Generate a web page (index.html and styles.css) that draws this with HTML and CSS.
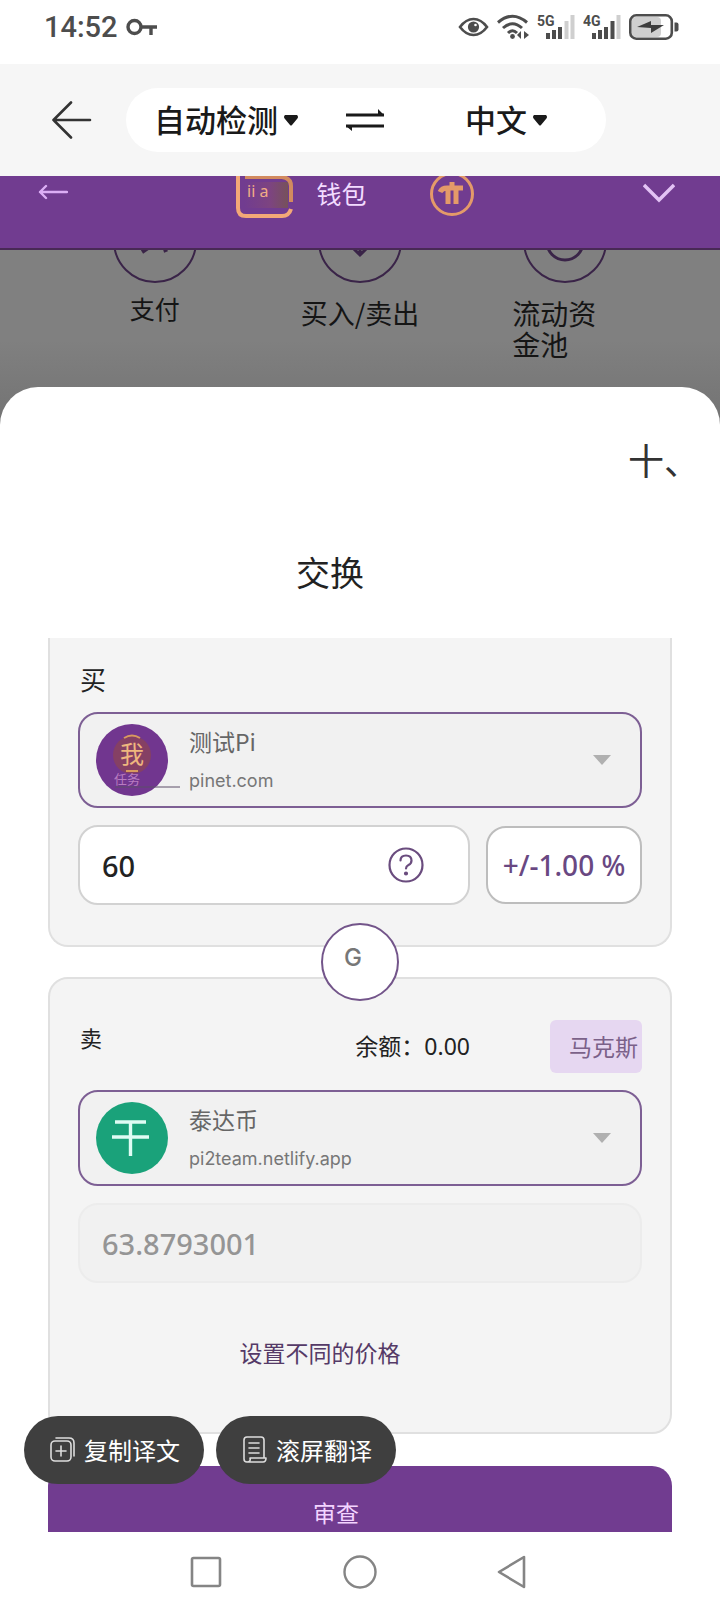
FILE: index.html
```html
<!DOCTYPE html>
<html lang="zh-CN">
<head>
<meta charset="utf-8">
<meta name="viewport" content="width=device-width, initial-scale=1">
<title>交换</title>
<link rel="stylesheet" href="styles.css">
</head>
<body>
<div class="status">
  <span class="clock">14:52</span>
  <svg class="key" width="32" height="18" viewBox="0 0 32 18" fill="none" stroke="#4d4d4d" stroke-width="3.4"><circle cx="8.500" cy="9" r="6.500"/><path d="M15 9h16M25 9v8"/></svg>
  <div class="status-icons">
    <svg width="31" height="20" viewBox="0 0 31 20"><path d="M2 10Q8 2 15.500 2T29 10Q23 18 15.500 18T2 10z" fill="none" stroke="#4d4d4d" stroke-width="2.600"/><circle cx="15.500" cy="10" r="5.600" fill="#4d4d4d"/><circle cx="17.500" cy="8" r="1.300" fill="#fff"/></svg>
    <svg width="32" height="26" viewBox="0 0 32 26" fill="none" stroke="#4d4d4d" stroke-width="3"><path d="M1 8.500Q15.500-4 30 8.500M6 14Q15.500 5.500 25 14M11 19Q15.500 14.500 20 19"/><circle cx="15.500" cy="22.500" r="2.400" fill="#4d4d4d" stroke="none"/><path d="M24 17v8l-4-4zM27 17v8l5-4z" fill="#4d4d4d" stroke="none"/></svg>
    <svg class="sig" width="38" height="26" viewBox="0 0 38 26"><text x="0" y="12">5G</text><path d="M11 25v-6M17 25V16M23 25V13" stroke="#4d4d4d" stroke-width="4"/><path d="M29.500 25V7M35.500 25V1" stroke="#cfcfcf" stroke-width="4"/></svg>
    <svg class="sig" width="38" height="26" viewBox="0 0 38 26"><text x="0" y="12">4G</text><path d="M11 25v-6M17 25V16M23 25V13M29.500 25V7" stroke="#4d4d4d" stroke-width="4"/><path d="M35.500 25V1" stroke="#cfcfcf" stroke-width="4"/></svg>
    <svg width="50" height="26" viewBox="0 0 50 26"><rect x="3" y="3" width="29" height="20" rx="4" fill="#cfcfcf"/><rect x="1.300" y="1.300" width="41.500" height="23.400" rx="6" fill="none" stroke="#4d4d4d" stroke-width="2.600"/><path d="M45.500 8.500h2q2 0 2 2v5q0 2-2 2h-2z" fill="#4d4d4d"/><path d="M8 13l14-6v4h13l-13 8v-5z" fill="#3d3d3d"/></svg>
  </div>
</div>

<header class="toolbar">
  <button class="back" type="button" aria-label="返回"><svg width="40" height="40" viewBox="0 0 40 40" fill="none" stroke="#333" stroke-width="2.600" stroke-linecap="round" stroke-linejoin="round"><path d="M38 20H1.500M19 2.500L1.500 20L19 37.500"/></svg></button>
  <div class="langs">
    <select class="lang" aria-label="源语言"><option>自动检测</option></select>
    <svg class="tri" width="14" height="11" viewBox="0 0 14 11"><path d="M1 0h12q2 2 0 4L8 10q-1 1-2 0L1 4Q-1 2 1 0z" fill="#1a1a1a"/></svg>
    <button class="switch" type="button" aria-label="交换语言"><svg width="38" height="22" viewBox="0 0 38 22"><path d="M0 6h38M0 17h38" stroke="#1a1a1a" stroke-width="2.800"/><path d="M32 0l6 6h-6zM0 17h6v5z" fill="#1a1a1a"/></svg></button>
    <select class="lang lang-to" aria-label="目标语言"><option>中文</option></select>
    <svg class="tri" width="14" height="11" viewBox="0 0 14 11"><path d="M1 0h12q2 2 0 4L8 10q-1 1-2 0L1 4Q-1 2 1 0z" fill="#1a1a1a"/></svg>
  </div>
</header>

<main class="page">
  <div class="wallet">
    <button class="plain" type="button" aria-label="后退"><svg width="30" height="34" viewBox="0 0 30 34" fill="none" stroke="#dcaef5" stroke-width="2.400" stroke-linecap="round" stroke-linejoin="round"><path d="M29 16H2M8 10l-6 6l6 6"/></svg></button>
    <div class="brand">
      <svg width="57" height="44" viewBox="0 0 57 44"><defs><linearGradient id="g"><stop offset="0" stop-color="#713c90"/><stop offset="0.600" stop-color="#7d4480"/><stop offset="1" stop-color="#76515b"/></linearGradient></defs><rect x="8" y="6" width="44" height="26" fill="url(#g)"/><path d="M2-4V32q0 8 8 8H46q7 0 9-7" fill="none" stroke="#f3a877" stroke-width="4"/><path d="M9 1H46q9 1 9 9V26" fill="none" stroke="#d28a5f" stroke-width="4"/><text class="mini" x="11" y="21">ii a</text></svg>
      <h1 class="wallet-name">钱包</h1>
      <svg width="46" height="42" viewBox="0 0 46 42" fill="none" stroke="#e49a69"><circle cx="23" cy="18" r="20.500" stroke-width="3"/><path d="M11 16q2-4 7-4h16M19 12v16M27 12v16M23 6v6" stroke-width="5"/></svg>
    </div>
    <button class="plain" type="button" aria-label="展开"><svg width="32" height="34" viewBox="0 0 32 34" fill="none" stroke="#e3c3f5" stroke-width="3.400"><path d="M1 9l15 15L31 9"/></svg></button>
  </div>

  <div class="actions">
    <div class="action"><svg width="84" height="34" viewBox="0 0 84 34" fill="none" stroke="#3a2448" stroke-width="2"><circle cx="42" cy="-9" r="41"/><path d="M29 2l6-4M51-4l2 6" stroke-width="4"/></svg><span class="a-pay">支付</span></div>
    <div class="action"><svg width="84" height="34" viewBox="0 0 84 34" fill="none" stroke="#3a2448" stroke-width="2"><circle cx="42" cy="-9" r="41"/><path d="M34-3l8 8l8-8M42-4v9" stroke-width="3"/></svg><span class="a-trade">买入/卖出</span></div>
    <div class="action"><svg width="84" height="34" viewBox="0 0 84 34" fill="none" stroke="#3a2448" stroke-width="2"><circle cx="42" cy="-9" r="41"/><circle cx="42" cy="-8" r="18" stroke-width="3"/></svg><span class="a-pool">流动资金池</span></div>
  </div>

  <section class="sheet">
    <button class="close" type="button">十、</button>
    <h2 class="title">交换</h2>
    <form class="form">
      <div class="card buy">
        <label class="side" for="buy">买</label>
        <div class="token">
          <svg class="coin" width="86" height="72" viewBox="0 0 86 72"><circle cx="36" cy="36" r="36" fill="#71368f"/><circle cx="36" cy="31" r="19" fill="#854064"/><path d="M28 14q8-5 16 0M30 47h12" stroke="#d99a5f" stroke-width="2" fill="none"/><path d="M19 63h65" stroke="#5d4e68"/><text class="coin-main" x="36" y="39">我</text><text class="coin-sub" x="31" y="60">任务</text></svg>
          <div class="token-text"><select class="token-name" id="buy"><option>测试Pi</option></select><span class="domain">pinet.com</span></div>
          <svg width="18" height="10" viewBox="0 0 18 10"><path d="M0 0h18L9 10z" fill="#b0b0b0"/></svg>
        </div>
        <div class="amount-row">
          <div class="amount">
            <input class="field" type="text" value="60" aria-label="买入数量">
            <button class="plain" type="button" aria-label="帮助"><svg width="36" height="36" viewBox="0 0 36 36" fill="none" stroke="#6a4c7e" stroke-width="2.200"><circle cx="18" cy="18" r="16.500"/><path d="M12.500 13.500q0-5 5.500-5t5.500 5q0 3-3 4.500q-2.500 1.300-2.500 3.500" stroke-linecap="round"/><circle cx="18" cy="26.500" r="1" fill="#6a4c7e"/></svg></button>
          </div>
          <button class="percent" type="button">+/-1.00 %</button>
        </div>
      </div>
      <div class="between"><button class="flip" type="button">G</button></div>
      <div class="card">
        <div class="sell-head">
          <label class="side side-sell" for="sell">卖</label>
          <span class="balance">余额：0.00</span>
          <button class="max" type="button">马克斯</button>
        </div>
        <div class="token">
          <svg class="coin" width="86" height="72" viewBox="0 0 86 72"><circle cx="36" cy="36" r="36" fill="#1aa27a"/><path d="M19 20h31M16 35h37M34.500 20v34" stroke="#dffcf4" stroke-width="3.400"/></svg>
          <div class="token-text"><select class="token-name" id="sell"><option>泰达币</option></select><span class="domain">pi2team.netlify.app</span></div>
          <svg width="18" height="10" viewBox="0 0 18 10"><path d="M0 0h18L9 10z" fill="#b0b0b0"/></svg>
        </div>
        <div class="amount amount-off"><input class="field" type="text" value="63.8793001" aria-label="卖出数量" disabled></div>
        <a class="price" href="#">设置不同的价格</a>
      </div>
      <button class="review" type="submit">审查</button>
    </form>
  </section>

  <div class="floating">
    <button class="chip" type="button"><svg width="26" height="26" viewBox="0 0 26 26" fill="none" stroke="#ddd" stroke-width="1.600" stroke-linecap="round"><rect x="1" y="4" width="20" height="20" rx="4"/><path d="M11 9v10M6 14h10M6 1h13q5 0 5 5v13"/></svg>复制译文</button>
    <button class="chip" type="button"><svg width="26" height="28" viewBox="0 0 26 28" fill="none" stroke="#ddd" stroke-width="1.600" stroke-linecap="round" stroke-linejoin="round"><path d="M22 21V4q0-3-3-3H5Q2 1 2 4v19q0 3 3 3h16q3 0 3-4H8q1 4-3 4M7 7h10M7 12h10M7 17h10"/></svg>滚屏翻译</button>
  </div>
</main>

<nav class="nav">
  <button class="plain" type="button" aria-label="最近任务"><svg width="34" height="34" viewBox="0 0 34 34" fill="none" stroke="#858585" stroke-width="2.600"><rect x="3" y="3" width="28" height="28" rx="1.500"/></svg></button>
  <button class="plain" type="button" aria-label="主页"><svg width="34" height="34" viewBox="0 0 34 34" fill="none" stroke="#858585" stroke-width="2.400"><circle cx="17" cy="17" r="15.500"/></svg></button>
  <button class="plain" type="button" aria-label="返回上级"><svg width="34" height="34" viewBox="0 0 34 34" fill="none" stroke="#858585" stroke-width="2.600" stroke-linejoin="round"><path d="M27 2v30L2 17z"/></svg></button>
</nav>
</body>
</html>
```
FILE: styles.css
```css
* { box-sizing: border-box; }
body {
  margin: 0;
  min-height: 100vh;
  display: flex;
  flex-direction: column;
  background: #fff;
  color: #222;
  font-family: "Noto Sans", "Noto Sans CJK SC", sans-serif;
}
button, select, input {
  margin: 0;
  padding: 0;
  border: 0;
  background: none;
  color: inherit;
  font: inherit;
}
select { appearance: none; }
svg { display: block; flex: none; }
.plain { display: block; flex: none; }

.status {
  display: flex;
  align-items: center;
  height: 64px;
  padding: 0 41px 10px 44px;
}
.clock { font: 500 29px/32px Roboto, sans-serif; color: #4d4d4d; }
.key { margin-left: 8px; }
.status-icons { display: flex; align-items: center; gap: 8px; margin-left: auto; }
.sig text { font: 700 14px Roboto, sans-serif; fill: #4d4d4d; }

.toolbar {
  display: flex;
  align-items: center;
  height: 112px;
  padding: 0 114px 0 52px;
  background: #f6f6f6;
}
.back { margin-right: 34px; }
.langs {
  display: flex;
  align-items: center;
  flex: 1;
  height: 64px;
  padding: 0 59px 0 28px;
  border-radius: 32px;
  background: #fff;
}
.lang {
  height: 46px;
  margin-bottom: 2px;
  font: 500 31px/46px "Noto Sans CJK SC", sans-serif;
  color: #1a1a1a;
}
.tri { margin-left: 6px; }
.switch { margin-left: 48px; }
.lang-to { margin-left: auto; }

.page {
  position: relative;
  display: flex;
  flex-direction: column;
  flex: 1;
  overflow: hidden;
}
.wallet {
  display: flex;
  align-items: flex-start;
  justify-content: space-between;
  height: 74px;
  padding: 0 45px 0 38px;
  background: #713c90;
  border-bottom: 2px solid #482955;
}
.brand { display: flex; align-items: flex-start; }
.mini { font: 16px "Noto Sans", sans-serif; fill: #f0ad86; }
.wallet-name {
  margin: 0 62px 0 23px;
  font: 400 25px/34px "Noto Sans CJK SC", sans-serif;
  color: #f3dcff;
}
.actions {
  display: grid;
  grid-template-columns: repeat(3, 1fr);
  height: 180px;
  padding: 0 52px;
  background: linear-gradient(#808080 50%, #727272);
  color: #151515;
  font-family: "Noto Sans CJK SC", sans-serif;
}
.action { display: flex; flex-direction: column; align-items: center; }
.a-pay { margin-top: 6px; font-size: 25px; line-height: 36px; }
.a-trade { margin-top: 11px; font-size: 27px; line-height: 36px; }
.a-pool { width: 106px; margin-top: 14px; font-size: 28px; line-height: 31px; }

.sheet {
  display: flex;
  flex-direction: column;
  flex: 1;
  margin-top: -43px;
  padding: 48px 48px 0;
  border-radius: 38px 38px 0 0;
  background: #fff;
}
.close {
  align-self: flex-end;
  margin-right: -28px;
  font: 400 36px/48px "Noto Sans CJK SC", sans-serif;
  color: #333;
}
.title {
  align-self: center;
  margin: 65px 0 42px;
  padding-right: 60px;
  font: 400 34px/48px "Noto Sans CJK SC", sans-serif;
}
.form { display: flex; flex-direction: column; flex: 1; }
.card {
  display: flex;
  flex-direction: column;
  padding: 41px 28px 62px;
  border: 2px solid #e0e0e0;
  border-radius: 20px;
  background: #f4f4f4;
}
.buy { padding: 24px 28px 40px; border-top: 0; border-radius: 0 0 20px 20px; }
.side { margin-bottom: 14px; padding-left: 2px; font-size: 26px; line-height: 36px; }
.token {
  display: flex;
  align-items: center;
  height: 96px;
  padding: 0 29px 0 16px;
  border: 2px solid #7d5f94;
  border-radius: 20px;
  background: #f1f1f1;
}
.coin { margin-right: 7px; }
.coin-main { font: 24px "Noto Sans CJK SC", sans-serif; fill: #efb77e; text-anchor: middle; }
.coin-sub { font: 13px "Noto Sans CJK SC", sans-serif; fill: #b87cc0; text-anchor: middle; }
.token-text { display: flex; flex-direction: column; flex: 1; gap: 10px; }
.token-name { height: 32px; font: 400 23px/32px "Noto Sans CJK SC", sans-serif; color: #666; }
.domain { font: 400 18px/28px Inter, sans-serif; color: #777; }
.amount-row { display: flex; align-items: center; gap: 16px; margin-top: 17px; }
.amount {
  display: flex;
  align-items: center;
  flex: 1;
  min-width: 0;
  height: 80px;
  padding: 0 44px 0 22px;
  border: 2px solid #d2d2d2;
  border-radius: 20px;
  background: #fff;
}
.field { flex: 1; min-width: 0; height: 48px; font-size: 29px; font-weight: 500; }
.amount-off { flex: none; margin-top: 17px; border-color: #ececec; background: #f1f1f1; }
.amount-off .field { color: #959595; }
.percent {
  flex: none;
  width: 156px;
  height: 78px;
  border: 2px solid #bdbdbd;
  border-radius: 20px;
  background: #fff;
  color: #694882;
  font-size: 28px;
  font-weight: 500;
  white-space: nowrap;
}
.between { display: flex; align-items: center; justify-content: center; height: 30px; }
.flip {
  position: relative;
  flex: none;
  width: 78px;
  height: 78px;
  padding: 0 14px 8px 0;
  border: 2px solid #73558a;
  border-radius: 50%;
  background: #fff;
  color: #777;
  font: 500 24px/32px Inter, sans-serif;
}
.sell-head { display: flex; align-items: center; gap: 16px; margin-bottom: 17px; }
.side-sell { align-self: flex-start; margin: 0; font-size: 22px; }
.balance { margin-left: auto; padding: 0 64px 2px 0; font-size: 23px; line-height: 36px; }
.max {
  height: 53px;
  padding: 0 4px 2px 19px;
  border-radius: 6px;
  background: #e6d7f1;
  color: #7b6189;
  font-size: 23px;
}
.price {
  align-self: center;
  margin-top: 54px;
  padding: 0 80px 1px 0;
  color: #553a67;
  font-size: 23px;
  line-height: 32px;
  text-decoration: none;
}
.review {
  flex: 1;
  min-height: 66px;
  margin-top: 32px;
  padding: 28px 48px 0 0;
  border-radius: 20px 20px 0 0;
  background: #713c90;
  color: #f3d4ff;
  font-size: 23px;
  line-height: 32px;
}
.floating { position: absolute; left: 24px; bottom: 48px; display: flex; gap: 12px; }
.chip {
  display: flex;
  align-items: center;
  gap: 8px;
  height: 68px;
  padding: 0 24px 0 26px;
  border-radius: 34px;
  background: #3f3f3f;
  color: #fff;
  font: 400 24px/36px "Noto Sans CJK SC", sans-serif;
}
.nav {
  display: flex;
  align-items: center;
  justify-content: center;
  gap: 120px;
  height: 80px;
  background: #fff;
}
```
